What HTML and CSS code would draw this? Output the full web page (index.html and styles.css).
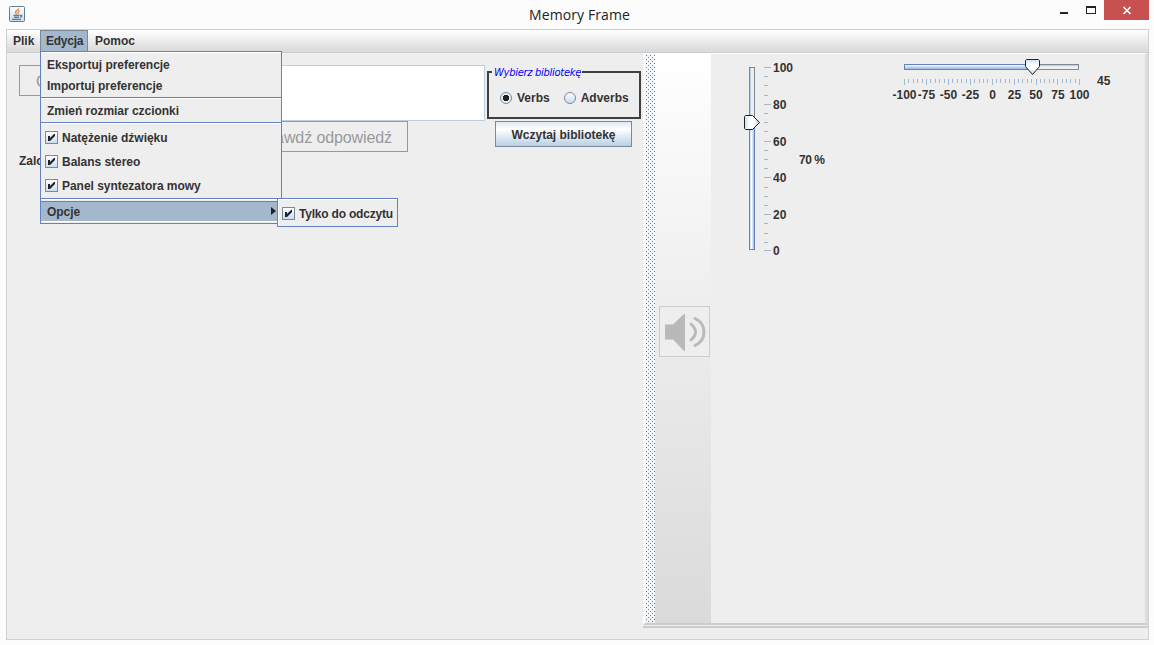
FILE: index.html
```html
<!DOCTYPE html>
<html lang="pl">
<head>
<meta charset="utf-8">
<title>Memory Frame</title>
<link rel="stylesheet" href="styles.css">
</head>
<body>
<div class="window">
  <header class="titlebar">
    <svg class="app-icon" width="16" height="16" viewBox="0 0 16 16">
      <defs><linearGradient id="ig" x1="0" y1="0" x2="0" y2="1"><stop offset="0" stop-color="#fff"/><stop offset="1" stop-color="#cfdbe4"/></linearGradient></defs>
      <rect x=".5" y=".5" width="15" height="15" rx="1" fill="url(#ig)" stroke="#5d7d96"/>
      <path d="M9.800 2.300C10 4 6.300 4.700 6.500 6.300C6.600 7.300 7.600 7.700 7.800 8.600M10.600 4.800C8.500 5.500 9.500 6.700 8.900 8" fill="none" stroke="#e8823a" stroke-width="1.300"/>
      <path d="M4.500 9.500H10.500M5 11.300H10M3 13.300H12M11 9.500C13.600 8.500 13.200 11 11 11.500" fill="none" stroke="#557f9c" stroke-width="1.300"/>
    </svg>
    <h1 class="title">Memory Frame</h1>
    <svg class="controls" width="100" height="20" viewBox="0 0 100 20" shape-rendering="crispEdges">
      <rect x="10" y="12" width="8" height="2" fill="#222"/>
      <path d="M36 6h10v8H36zM37 8v5h8V8z" fill="#222" fill-rule="evenodd"/>
      <rect x="54" y="0" width="45" height="20" fill="#c75050"/>
      <path d="M73.500 7L80.500 14M80.500 7L73.500 14" stroke="#fff" stroke-width="1.700" shape-rendering="auto"/>
    </svg>
  </header>

  <main class="frame">
    <nav class="menubar">
      <span class="menu">Plik</span>
      <div class="menu open"><span class="name">Edycja</span>
        <div class="dropdown">
          <div class="group first">
            <div class="item">Eksportuj preferencje</div>
            <div class="item">Importuj preferencje</div>
          </div>
          <div class="group second">
            <div class="item">Zmień rozmiar czcionki</div>
          </div>
          <div class="group checks">
            <div class="item check"><i class="box"><svg width="13" height="13"><path d="M3 5h2v2l4-4h1v2L5 10H3z" fill="#222"/></svg></i>Natężenie dźwięku</div>
            <div class="item check"><i class="box"><svg width="13" height="13"><path d="M3 5h2v2l4-4h1v2L5 10H3z" fill="#222"/></svg></i>Balans stereo</div>
            <div class="item check"><i class="box"><svg width="13" height="13"><path d="M3 5h2v2l4-4h1v2L5 10H3z" fill="#222"/></svg></i>Panel syntezatora mowy</div>
          </div>
          <div class="group last">
            <div class="item selected">Opcje<i class="arrow"></i></div>
          </div>
          <div class="submenu">
            <div class="item check"><i class="box"><svg width="13" height="13"><path d="M3 5h2v2l4-4h1v2L5 10H3z" fill="#222"/></svg></i>Tylko do odczytu</div>
          </div>
        </div>
      </div>
      <span class="menu help">Pomoc</span>
    </nav>

    <div class="split">
      <section class="left">
        <div class="column-main">
          <div class="row">
            <div class="btn-disabled small">O</div>
            <div class="input"></div>
          </div>
          <div class="btn-disabled answer">Sprawdź odpowiedź</div>
          <div class="status">Zalo</div>
        </div>
        <div class="column-side">
          <fieldset class="library">
            <legend>Wybierz bibliotekę</legend>
            <div class="radios">
              <i class="radio on"></i><span class="verbs">Verbs</span>
              <i class="radio"></i><span>Adverbs</span>
            </div>
          </fieldset>
          <button class="load">Wczytaj bibliotekę</button>
        </div>
      </section>

      <section class="right">
        <div class="panes">
          <svg class="divider" width="10" height="568" shape-rendering="crispEdges">
            <defs><pattern id="dots" width="4" height="4" patternUnits="userSpaceOnUse"><path d="M1 1h1v1H1zM3 3h1v1H3z" fill="#6f7f90"/></pattern></defs>
            <rect width="10" height="568" fill="#f3f6f9"/><rect width="10" height="568" fill="url(#dots)"/>
          </svg>
          <aside class="toolbar">
            <div class="speaker">
              <svg width="49" height="49">
                <path d="M5 17.500H13L24 7H25V44H24L13 32.500H5z" fill="#b9b9b9"/>
                <path d="M31 17Q40 25 31 33" fill="none" stroke="#b9b9b9" stroke-width="3" stroke-linecap="round"/>
                <path d="M35 11.500C47 17 47 33 35 38.500" fill="none" stroke="#b9b9b9" stroke-width="3" stroke-linecap="round"/>
              </svg>
            </div>
          </aside>
          <div class="sliders">
            <svg width="434" height="220" viewBox="711 54 434 220" class="slider-art" shape-rendering="crispEdges">
              <defs>
                <linearGradient id="vt"><stop offset="0" stop-color="#b8cfe5"/><stop offset=".4" stop-color="#fff"/><stop offset="1" stop-color="#8fb0d8"/></linearGradient>
                <linearGradient id="ht" x1="0" y1="0" x2="0" y2="1"><stop offset="0" stop-color="#fff"/><stop offset="1" stop-color="#8fb0d8"/></linearGradient>
                <linearGradient id="vk"><stop offset="0" stop-color="#c8ddf2"/><stop offset=".35" stop-color="#fff"/><stop offset=".6" stop-color="#fff"/><stop offset="1" stop-color="#b8cfe5"/></linearGradient>
                <linearGradient id="hk" x1="0" y1="0" x2="0" y2="1"><stop offset="0" stop-color="#c8ddf2"/><stop offset=".35" stop-color="#fff"/><stop offset=".6" stop-color="#fff"/><stop offset="1" stop-color="#b8cfe5"/></linearGradient>
              </defs>
              <rect x="749.500" y="67.500" width="5" height="56" fill="#eee" stroke="#7a8a99"/><path d="M750.500 68v55" stroke="#b8cfe5"/>
              <rect x="749.500" y="123.500" width="5" height="126" fill="url(#vt)" stroke="#6382bf"/>
              <path d="M764 67.500h7M764 104.500h7M764 141.500h7M764 177.500h7M764 214.500h7M764 250.500h7M764 76.500h4M764 85.500h4M764 95.500h4M764 113.500h4M764 122.500h4M764 131.500h4M764 150.500h4M764 159.500h4M764 168.500h4M764 187.500h4M764 196.500h4M764 205.500h4M764 223.500h4M764 233.500h4M764 242.500h4" stroke="#a3b8cc"/>
              <path d="M745.500 115.500h7l7 7-7 7h-7l-1-1v-12z" fill="url(#vk)" stroke="#222" shape-rendering="auto"/>
              <rect x="1032.500" y="64.500" width="46" height="5" fill="#eee" stroke="#7a8a99"/><path d="M1033 65.500h45" stroke="#b8cfe5"/>
              <rect x="904.500" y="64.500" width="128" height="5" fill="url(#ht)" stroke="#6382bf"/>
              <path d="M904.500 79v6M926.500 79v6M948.500 79v6M970.500 79v6M992.500 79v6M1014.500 79v6M1036.500 79v6M1057.500 79v6M1079.500 79v6M908.500 79v4M913.500 79v4M917.500 79v4M922.500 79v4M930.500 79v4M935.500 79v4M939.500 79v4M944.500 79v4M952.500 79v4M957.500 79v4M961.500 79v4M966.500 79v4M974.500 79v4M979.500 79v4M983.500 79v4M987.500 79v4M996.500 79v4M1000.500 79v4M1005.500 79v4M1009.500 79v4M1018.500 79v4M1022.500 79v4M1027.500 79v4M1031.500 79v4M1040.500 79v4M1044.500 79v4M1049.500 79v4M1053.500 79v4M1062.500 79v4M1066.500 79v4M1070.500 79v4M1075.500 79v4" stroke="#a3b8cc"/>
              <path d="M1026.500 59.500h12l1 1v6l-7 8-7-8v-6z" fill="url(#hk)" stroke="#222" shape-rendering="auto"/>
              <g class="labels">
                <text x="773" y="72">100</text><text x="773" y="109">80</text><text x="773" y="146">60</text><text x="773" y="182">40</text><text x="773" y="219">20</text><text x="773" y="255">0</text>
                <text x="799" y="164" textLength="26">70 %</text><text x="1097" y="85">45</text>
                <g text-anchor="middle"><text x="904.500" y="99">-100</text><text x="926.500" y="99">-75</text><text x="948.500" y="99">-50</text><text x="970.500" y="99">-25</text><text x="992.500" y="99">0</text><text x="1014.500" y="99">25</text><text x="1036" y="99">50</text><text x="1058" y="99">75</text><text x="1079.500" y="99">100</text></g>
              </g>
            </svg>
          </div>
        </div>
      </section>
    </div>
  </main>
</div>
</body>
</html>
```
FILE: styles.css
```css
* { box-sizing: border-box; }
body { margin: 0; }
.window {
  width: 1154px;
  height: 645px;
  overflow: hidden;
  background: #fcfcfc;
  font: bold 12px/14px "Liberation Sans", Arial, sans-serif;
  color: #333;
}
.titlebar { display: flex; height: 29px; padding-left: 9px; }
.app-icon { margin-top: 6px; }
.title {
  flex: 1;
  margin: 0;
  padding: 5px 0 0 84px;
  text-align: center;
  font: 14px/20px "Open Sans", sans-serif;
  letter-spacing: 0.1px;
  color: #222;
}
.controls { margin-right: 4px; }
.frame {
  width: 1143px;
  height: 611px;
  margin-left: 6px;
  border: 1px solid #d0d0d0;
  background: #eee;
}
.menubar {
  display: flex;
  height: 22px;
  background: linear-gradient(#fff, #dadada);
  border-bottom: 1px solid #ddd;
}
.menu { position: relative; height: 21px; width: 33px; padding: 4px 0 0 6px; white-space: nowrap; }
.menu.open { width: 48px; padding: 3px 0 0 5px; border: 1px solid #7a8a99; border-bottom: 0; background: #a3b8cc; z-index: 2; }
.name { letter-spacing: -0.25px; }
.menu.help { padding-left: 7px; width: 60px; }
.dropdown {
  position: absolute;
  left: -1px;
  top: 20px;
  width: 242px;
  height: 173px;
  border: 1px solid #6382bf;
  background: #eee;
}
.group { border-bottom: 1px solid #6382bf; border-top: 1px solid #fff; }
.group.first { height: 46px; padding-top: 2px; }
.group.second { height: 25px; padding-top: 2px; }
.group.checks { height: 76px; padding-top: 2px; }
.group.last { height: 24px; padding-top: 1px; border-bottom: 0; }
.item { height: 21px; padding: 3px 0 0 6px; white-space: nowrap; letter-spacing: -0.03px; }
.item.check { display: flex; gap: 4px; height: 24px; padding: 5px 0 0 4px; }
.box {
  width: 13px;
  height: 13px;
  border: 1px solid #7a8a99;
  background: linear-gradient(#fff, #c8dcee);
}
.box svg { display: block; margin: -1px; }
.item.selected { display: flex; justify-content: space-between; height: 21px; padding-right: 5px; background: #a3b8cc; border-top: 1px solid #6382bf; border-bottom: 1px solid #fff; }
.arrow { width: 0; height: 0; margin-top: 2px; border-left: 5px solid #222; border-top: 4px solid transparent; border-bottom: 4px solid transparent; }
.submenu {
  position: absolute;
  left: 236px;
  top: 146px;
  width: 121px;
  height: 29px;
  border: 1px solid #6382bf;
  background: #eee;
  box-shadow: inset 1px 1px #fff;
}
.submenu .item { padding-top: 8px; letter-spacing: -0.2px; }
.split { display: flex; height: 587px; border-top: 1px solid #ccc; }
.left { display: flex; width: 636px; padding-top: 12px; }
.column-main { width: 480px; padding-left: 12px; }
.row { display: flex; gap: 6px; }
.btn-disabled { border: 1px solid #999; color: #999; font: 16px/31px "Liberation Sans", Arial, sans-serif; height: 31px; }
.small { width: 130px; padding-left: 16px; }
.input { flex: 1; height: 56px; margin-right: 2px; border: 1px solid #b8cfe5; background: #fff; }
.answer { width: 158px; margin-left: 231px; padding-right: 15px; text-align: right; white-space: nowrap; letter-spacing: -0.1px; display: flex; justify-content: flex-end; }
.status { margin-top: 2px; }
.library { width: 154px; height: 54px; margin: 0; padding: 0; border: 2px solid #404040; }
.library legend { margin-left: 3px; padding: 1px 1px 0 2px; color: #00f; font: italic 10px/13px "DejaVu Sans", sans-serif; white-space: nowrap; letter-spacing: -0.32px; }
.radios { display: flex; align-items: center; padding: 12px 0 0 11px; }
.radio { width: 12px; height: 12px; margin-right: 5px; border: 1px solid #7a8a99; border-radius: 50%; background: linear-gradient(#fff, #c8dcee); }
.radio.on { background: radial-gradient(circle, #222 0 3px, #e6eff7 3.500px); }
.verbs { margin-right: 14px; }
.load { display: block; width: 137px; height: 26px; margin: 2px 0 0 8px; padding: 1px 0 0; border: 1px solid #7a8a99; background: linear-gradient(#dde8f3, #fff 30%, #b8cfe5); font: inherit; color: #333; }
.right { width: 505px; height: 575px; border-bottom: 2px solid #ccc; }
.panes {
  display: flex;
  height: 572px;
  border-style: solid;
  border-width: 1px 3px 2px 2px;
  border-color: #fff #ddd #ccc #fff;
}
.divider { flex: none; }
.toolbar { width: 56px; flex: none; height: 569px; padding: 252px 0 0 4px; background: linear-gradient(#fff, #ececec 50%, #dadada); }
.speaker { width: 51px; height: 51px; border: 1px solid #ccc; background: #eee; }
.sliders { flex: 1; min-width: 0; }
.slider-art { display: block; }
.labels text { font: bold 12px "Liberation Sans", Arial, sans-serif; fill: #333; }
```
